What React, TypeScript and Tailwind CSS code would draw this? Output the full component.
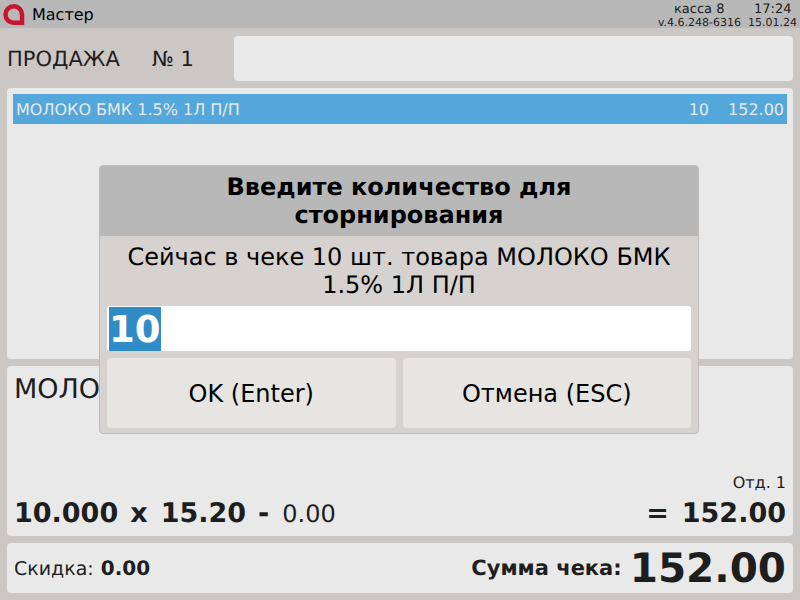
export default function App() {
  return (
    <div className="relative flex h-[600px] w-[800px] flex-col overflow-hidden bg-[#cbc7c4] font-['DejaVu_Sans',sans-serif] text-[#1e1e1e] [text-rendering:geometricPrecision]">
      <header className="flex h-[28px] items-center justify-between bg-[#b8b8b8] pl-[3px] pr-[3px]">
        <div className="flex items-center gap-[7px]">
          <svg width="22" height="21" viewBox="0 0 22 21" className="block">
            <path
              d="M19 18.75H10.75A8.25 8.25 0 1 1 19 10.5Z"
              fill="none"
              stroke="#c8152d"
              strokeWidth="4.5"
            />
          </svg>
          <span className="pt-[2px] text-[16px] text-black">Мастер</span>
        </div>
        <div className="flex flex-col items-end pt-[3px] text-[11px] leading-[13px]">
          <div className="flex pr-[6px] text-[13px] leading-[13px]">
            <span className="w-[80px]">касса 8</span>
            <span className="w-[37px]">17:24</span>
          </div>
          <div className="flex gap-[7px]">
            <span>v.4.6.248-6316</span>
            <span>15.01.24</span>
          </div>
        </div>
      </header>

      <div className="flex flex-1 flex-col px-[7px] pb-[7px]">
        <div className="flex h-[60px] items-center">
          <span className="w-[145px] pt-[3px] text-[21px]">ПРОДАЖА</span>
          <span className="w-[82px] pt-[3px] text-[21px]">№ 1</span>
          <div className="h-[45px] flex-1 rounded-[4px] bg-[#e9e9e9]" />
        </div>

        <section className="h-[271px] rounded-[4px] bg-[#e9e9e9] p-[6px]">
          <div className="flex h-[30px] items-center justify-between bg-[#53a7db] pl-[3px] pr-[3px] pt-[1px] text-[16px] text-[#e9e9e9]">
            <span>МОЛОКО БМК 1.5% 1Л П/П</span>
            <div className="flex gap-[19px]">
              <span>10</span>
              <span>152.00</span>
            </div>
          </div>
        </section>

        <section className="mt-[7px] flex h-[170px] flex-col justify-between rounded-[4px] bg-[#e9e9e9] px-[7px] pb-[5px] pt-[7px]">
          <div className="text-[27px] leading-[34px]">МОЛОКО БМК 1.5% 1Л П/П</div>
          <div>
            <div className="text-right text-[16px] leading-[18px]">Отд. 1</div>
            <div className="mt-[5px] flex items-center justify-between leading-[34px]">
              <div className="flex items-baseline">
                <span className="text-[27px] font-bold">10.000</span>
                <span className="ml-[12px] text-[27px] font-bold">x</span>
                <span className="ml-[13px] text-[27px] font-bold">15.20</span>
                <span className="ml-[12px] text-[27px] font-bold">-</span>
                <span className="ml-[13px] text-[24px]">0.00</span>
              </div>
              <div className="flex items-baseline">
                <span className="text-[27px] font-bold">=</span>
                <span className="ml-[13px] text-[27px] font-bold">152.00</span>
              </div>
            </div>
          </div>
        </section>

        <section className="mt-[7px] flex h-[50px] items-center justify-between rounded-[4px] bg-[#e9e9e9] px-[7px]">
          <div className="text-[19px]">
            Скидка: <span className="ml-[1px] text-[20px] font-bold">0.00</span>
          </div>
          <div className="flex items-center gap-[8px]">
            <span className="pt-[1px] text-[21px] font-bold">Сумма чека:</span>
            <span className="text-[40.5px] font-bold leading-[50px]">152.00</span>
          </div>
        </section>
      </div>

      <div className="absolute left-[99px] top-[165px] flex h-[269px] w-[600px] flex-col overflow-hidden rounded-[4px] border border-[#bfbbb8] bg-[#d6d2cf] text-black">
        <div className="flex h-[70px] items-center justify-center bg-[#b8b8b8] text-center text-[24px] font-bold leading-[28px]">
          <div>
            Введите количество для
            <br />
            сторнирования
          </div>
        </div>
        <div className="pt-[7px] text-center text-[24px] leading-[28px]">
          Сейчас в чеке 10 шт. товара МОЛОКО БМК
          <br />
          1.5% 1Л П/П
        </div>
        <div className="mx-[7px] mt-[7px] flex h-[45px] items-center rounded-[3px] bg-white pl-[2px]">
          <span className="h-[44px] bg-[#308cc6] pt-[1px] text-[37px] font-bold leading-[44px] text-white">10</span>
        </div>
        <div className="mx-[7px] mt-[7px] flex gap-[7px]">
          <button type="button" className="h-[70px] flex-1 rounded-[4px] bg-[#e6e5e2] pt-[1px] text-[24px]">
            OK (Enter)
          </button>
          <button type="button" className="h-[70px] flex-1 rounded-[4px] bg-[#e6e5e2] pt-[1px] text-[24px]">
            Отмена (ESC)
          </button>
        </div>
      </div>
    </div>
  );
}
